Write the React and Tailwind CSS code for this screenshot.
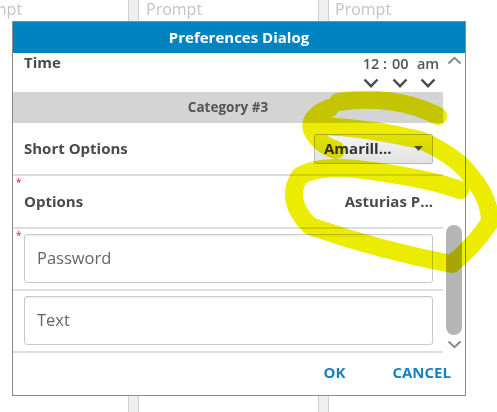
import React from 'react';

const font = { fontFamily: '"Open Sans", "Noto Sans", Arial, sans-serif' };

function Chevron({ up = false, big = false, className = '' }) {
  const w = big ? 16 : 15;
  const h = big ? 10 : 9;
  const d = up
    ? `M1.5 ${h - 1.5} L${w / 2} 1.8 L${w - 1.5} ${h - 1.5}`
    : `M1.5 1.5 L${w / 2} ${h - 1.8} L${w - 1.5} 1.5`;
  return (
    <svg width={w} height={h} viewBox={`0 0 ${w} ${h}`} className={className}>
      <path d={d} fill="none" stroke="currentColor" strokeWidth={big ? 2.4 : 2} />
    </svg>
  );
}

function Separator() {
  return <div className="h-[2px] bg-[#dedede]" />;
}

function Required() {
  return <span className="absolute left-[3px] top-[1px] text-[10px] leading-none text-[#d02020]">*</span>;
}

function TextInput({ placeholder }) {
  return (
    <div className="ml-[11px] mr-[10px] flex h-[49px] items-center rounded-[3px] border border-[#c8c8c8] px-[12px] text-[16.5px] text-[#666] shadow-[inset_0_2px_1px_rgba(0,0,0,0.04)]">
      {placeholder}
    </div>
  );
}

export default function App() {
  return (
    <div className="relative h-[412px] w-[497px] overflow-hidden bg-white" style={font}>
      {/* page behind the dialog */}
      <div className="flex h-full">
        <div className="w-[128px] overflow-hidden">
          <div className="-ml-[34px] -mt-[3px] text-[16px] text-[#c4c4c4]">Prompt</div>
        </div>
        <div className="w-[11px] border-x border-[#cfcfcf] bg-[#efefef]" />
        <div className="w-[179px]">
          <div className="-mt-[3px] pl-[7px] text-[16px] text-[#c4c4c4]">Prompt</div>
        </div>
        <div className="w-[11px] border-x border-[#cfcfcf] bg-[#efefef]" />
        <div className="flex-1">
          <div className="-mt-[3px] pl-[6px] text-[16px] text-[#c4c4c4]">Prompt</div>
        </div>
      </div>

      {/* dialog */}
      <div className="absolute left-[12px] top-[21px] flex h-[375px] w-[454px] flex-col border border-[#8a8a8a] bg-white">
        <div className="flex h-[31px] items-center justify-center bg-[#0084bf] text-[15px] font-bold text-white">
          Preferences Dialog
        </div>

        <div className="flex h-[305px]">
          <div className="w-[430px] overflow-hidden">
            {/* time row */}
            <div className="flex h-[39px] justify-between pl-[11px] pr-[2px]">
              <div className="-mt-[2px] text-[15px] font-bold text-[#4a4a4a]">Time</div>
              <div className="grid grid-cols-[28px_30px_26px] text-[#4a4a4a]">
                <div className="-mt-[2px] flex items-center justify-center text-[14.5px] font-semibold text-[#555]">12</div>
                <div className="-mt-[2px] flex items-center text-[14.5px] font-semibold text-[#555]">
                  <span className="-ml-[2px]">:</span>
                  <span className="ml-[5px]">00</span>
                </div>
                <div className="-mt-[2px] flex items-center justify-center text-[14.5px] font-semibold text-[#555]">am</div>
                <div className="mt-[2px] flex justify-center"><Chevron big /></div>
                <div className="mt-[2px] flex justify-center"><Chevron big /></div>
                <div className="mt-[2px] flex justify-center"><Chevron big /></div>
              </div>
            </div>

            {/* category header */}
            <div className="flex h-[31px] items-center justify-center bg-[#d4d4d4] text-[13.5px] font-bold text-[#555]">
              Category #3
            </div>

            {/* short options */}
            <div className="flex h-[51px] items-center justify-between pl-[11px] pr-[10px]">
              <div className="text-[15px] font-bold text-[#4a4a4a]">Short Options</div>
              <div className="flex h-[30px] w-[119px] items-center justify-between rounded-[2px] border border-[#b8b8b8] bg-gradient-to-b from-[#f4f4f4] to-[#e2e2e2] pl-[9px] pr-[9px]">
                <span className="text-[15px] font-bold text-[#333]">Amarill...</span>
                <svg width="9" height="5" viewBox="0 0 9 5"><path d="M0 0 L9 0 L4.5 5 Z" fill="#555" /></svg>
              </div>
            </div>
            <Separator />

            {/* options */}
            <div className="relative flex h-[51px] items-center justify-between pl-[11px] pr-[10px]">
              <Required />
              <div className="text-[15px] font-bold text-[#4a4a4a]">Options</div>
              <div className="text-[15px] font-bold text-[#4a4a4a]">Asturias P...</div>
            </div>
            <Separator />

            {/* password */}
            <div className="relative pb-[6px] pt-[5px]">
              <Required />
              <TextInput placeholder="Password" />
            </div>
            <Separator />

            {/* text */}
            <div className="pb-[6px] pt-[5px]">
              <TextInput placeholder="Text" />
            </div>
            <Separator />
          </div>

          {/* scrollbar */}
          <div className="flex w-[22px] flex-col items-center text-[#888]">
            <Chevron up className="mt-[3px]" />
            <div className="mt-[160px] h-[110px] w-[16px] rounded-full bg-[#b5b5b5]" />
            <Chevron className="mt-[5px]" />
          </div>
        </div>

        {/* footer */}
        <div className="flex flex-1 items-center justify-end gap-[47px] pb-[8px] pr-[14px] text-[15px] font-bold text-[#1a7fc1]">
          <span>OK</span>
          <span>CANCEL</span>
        </div>
      </div>

      {/* highlighter annotation */}
      <svg className="pointer-events-none absolute left-0 top-0 mix-blend-multiply" width="497" height="412" viewBox="0 0 497 412">
        <g fill="none" stroke="#ecec00" strokeWidth="18" strokeLinecap="round" strokeLinejoin="round">
          <path d="M338 102 Q394 94 438 116" />
          <path d="M330 108 Q304 118 314 134 Q322 146 336 150" />
          <path d="M322 126 Q370 128 420 140 Q455 155 470 175 Q490 198 490 222 Q474 246 452 264 Q378 250 310 226 Q284 200 300 176 Q322 163 372 171 Q430 179 460 190" />
        </g>
      </svg>
    </div>
  );
}
